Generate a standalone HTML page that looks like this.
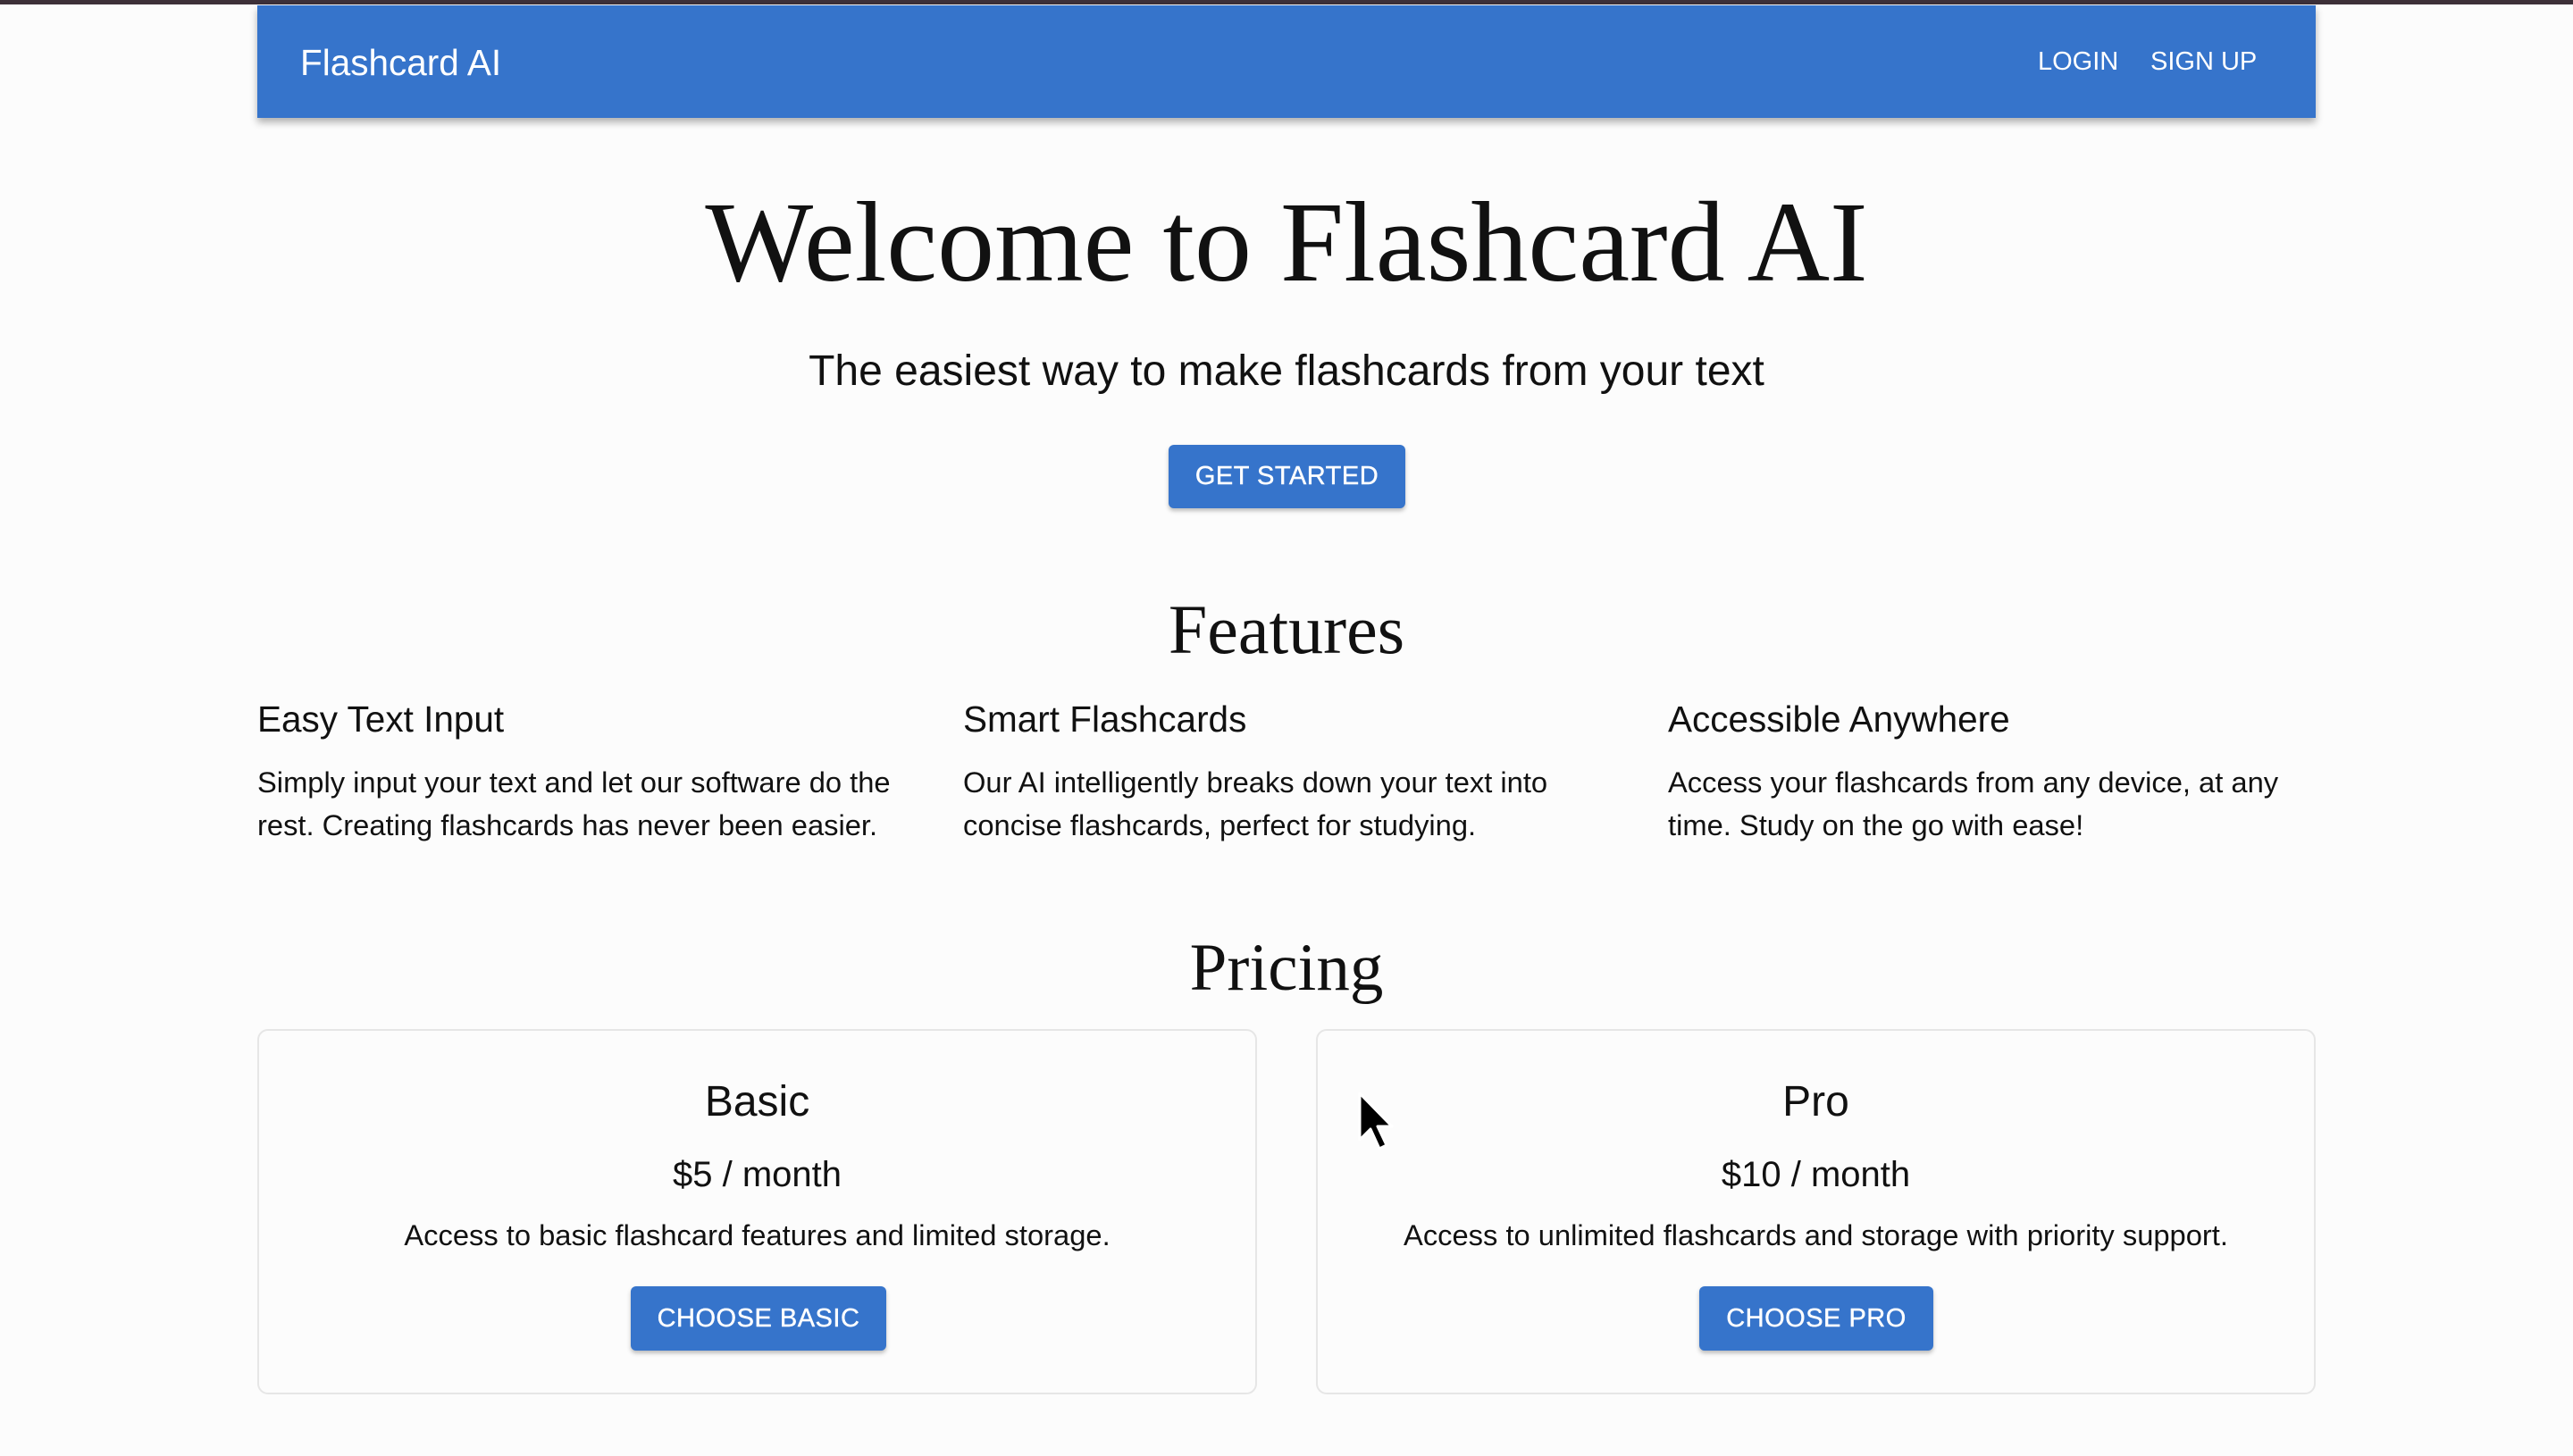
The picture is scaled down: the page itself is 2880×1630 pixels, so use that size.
<!DOCTYPE html>
<html><head><meta charset="utf-8"><style>
*{margin:0;padding:0;box-sizing:border-box}
body{width:2880px;height:1630px;background:#fcfcfc;position:relative;overflow:hidden;font-family:"Liberation Sans",Arial,sans-serif;color:#111}
.t{position:absolute;white-space:nowrap;line-height:1}
.c{left:0;width:2880px;text-align:center}
.serif{font-family:"Liberation Serif",Georgia,serif}
.btn{position:absolute;background:#3674cb;color:#fff;border-radius:6px;box-shadow:0 3px 5px rgba(0,0,0,.25);display:flex;align-items:center;justify-content:center;font-size:29px;letter-spacing:0.5px;-webkit-text-stroke:0.4px #fff}
.card{position:absolute;top:1152px;height:409px;width:1119px;border:2px solid #e6e6e6;border-radius:12px;background:#fcfcfc}
.card .t{left:0;width:100%;text-align:center}
</style></head><body>
<div style="position:absolute;left:0;top:0;width:2880px;height:5px;background:#3d3038"></div>
<div style="position:absolute;left:288px;top:6px;width:2304px;height:126px;background:#3674cb;box-shadow:0 5px 8px rgba(0,0,0,.3)"></div>
<div class="t" style="left:336px;top:50px;font-size:40.5px;color:#fff">Flashcard AI</div>
<div class="t" style="left:2281px;top:55px;font-size:29px;color:#fff">LOGIN</div>
<div class="t" style="left:2407px;top:55px;font-size:29px;color:#fff">SIGN UP</div>

<div class="t c serif" style="top:207px;font-size:128px">Welcome to Flashcard AI</div>
<div class="t c" style="top:392px;font-size:48px">The easiest way to make flashcards from your text</div>
<div class="btn" style="left:1308px;top:498px;width:265px;height:71px">GET STARTED</div>

<div class="t c serif" style="top:666px;font-size:78px">Features</div>
<div class="t" style="left:288px;top:785px;font-size:40.5px">Easy Text Input</div>
<div class="t" style="left:1078px;top:785px;font-size:40.5px">Smart Flashcards</div>
<div class="t" style="left:1867px;top:785px;font-size:40.5px">Accessible Anywhere</div>
<div class="t" style="left:288px;top:852px;font-size:32.7px;line-height:48px">Simply input your text and let our software do the<br>rest. Creating flashcards has never been easier.</div>
<div class="t" style="left:1078px;top:852px;font-size:32.7px;line-height:48px">Our AI intelligently breaks down your text into<br>concise flashcards, perfect for studying.</div>
<div class="t" style="left:1867px;top:852px;font-size:32.7px;line-height:48px">Access your flashcards from any device, at any<br>time. Study on the go with ease!</div>

<div class="t c serif" style="top:1046px;font-size:75px">Pricing</div>

<div class="card" style="left:288px">
<div class="t" style="top:56px;font-size:48px">Basic</div>
<div class="t" style="top:141px;font-size:40px">$5 / month</div>
<div class="t" style="top:213px;font-size:32.7px">Access to basic flashcard features and limited storage.</div>
<div class="btn" style="left:416px;top:286px;width:286px;height:72px">CHOOSE BASIC</div>
</div>
<div class="card" style="left:1473px">
<div class="t" style="top:56px;font-size:48px">Pro</div>
<div class="t" style="top:141px;font-size:40px">$10 / month</div>
<div class="t" style="top:213px;font-size:32.7px">Access to unlimited flashcards and storage with priority support.</div>
<div class="btn" style="left:427px;top:286px;width:262px;height:72px">CHOOSE PRO</div>
</div>

<svg style="position:absolute;left:1518px;top:1220px" width="48" height="72" viewBox="0 0 48 72">
<path d="M4 4 L4 56 L16 44 L26 66 L34 62 L24 41 L40 41 Z" fill="#000" stroke="#fff" stroke-width="3" stroke-linejoin="round"/>
</svg>
</body></html>
